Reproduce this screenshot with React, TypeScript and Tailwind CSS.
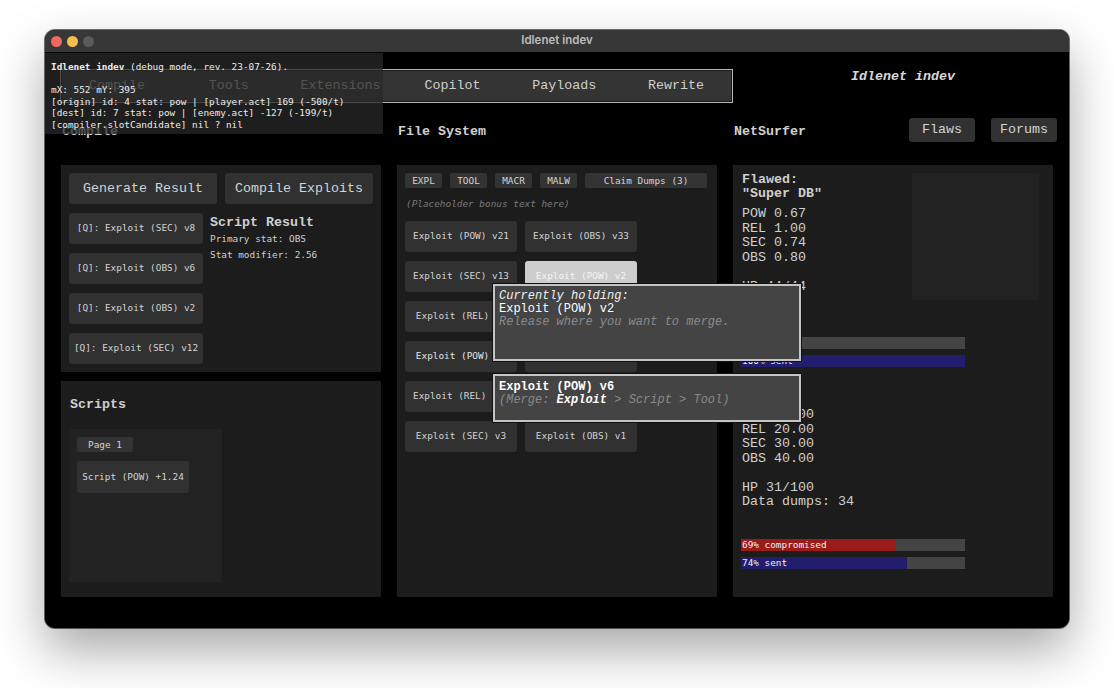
import React from "react";

const big = "font-['Liberation_Mono',monospace] text-[13.33px]";
const small = "font-['DejaVu_Sans_Mono',monospace] text-[9.4px]";

function Btn({ className = "", children }: { className?: string; children: React.ReactNode }) {
  return (
    <div className={`flex items-center justify-center rounded-[3px] bg-[#313131] text-[#d4d4d4] whitespace-nowrap ${className}`}>
      {children}
    </div>
  );
}

function Bar({ pct, label, color, className = "" }: { pct: number; label: string; color: string; className?: string }) {
  return (
    <div className={`relative h-[12px] w-[224px] bg-[#444444] ${className}`}>
      <div className={`h-full overflow-hidden whitespace-nowrap ${color}`} style={{ width: `${pct}%` }}>
        <span className={`${small} block pl-px leading-[12px] text-[#f0f0f0]`}>{label}</span>
      </div>
    </div>
  );
}

const tabs = ["Compile", "Tools", "Extensions", "Copilot", "Payloads", "Rewrite"];

const grid: { t: string; kind?: "drag" | "green" }[] = [
  { t: "Exploit (POW) v21" },
  { t: "Exploit (OBS) v33" },
  { t: "Exploit (SEC) v13" },
  { t: "Exploit (POW) v2", kind: "drag" },
  { t: "Exploit (REL) v4" },
  { t: "Exploit (SEC) v7" },
  { t: "Exploit (POW) v6", kind: "green" },
  { t: "Exploit (OBS) v9" },
  { t: "Exploit (REL) v11" },
  { t: "Exploit (POW) v5" },
  { t: "Exploit (SEC) v3" },
  { t: "Exploit (OBS) v1" },
];

export default function App() {
  return (
    <div className="w-[1114px] h-[688px] bg-white pl-[45px] pt-[30px] overflow-hidden">
      <div className="w-[1024px] h-[598px] rounded-[10px] overflow-hidden bg-black flex flex-col shadow-[0_22px_50px_rgba(0,0,0,0.35),0_0_0_1px_rgba(0,0,0,0.55)]">
        {/* title bar */}
        <div className="relative h-[23px] shrink-0 bg-[#373737] border-b border-black flex items-center">
          <div className="flex gap-[5px] pl-[6px]">
            <span className="w-[11px] h-[11px] rounded-full bg-[#ed6a5e]" />
            <span className="w-[11px] h-[11px] rounded-full bg-[#f5bf4f]" />
            <span className="w-[11px] h-[11px] rounded-full bg-[#5a5a5a]" />
          </div>
          <div className="absolute inset-0 flex items-center justify-center font-['Inter',sans-serif] text-[11.5px] font-semibold text-[#bcbcbc]">
            Idlenet indev
          </div>
        </div>

        {/* content */}
        <div className="relative flex-1 bg-black text-[#d0d0d0]">
          {/* top row */}
          <div className="pt-4 pl-[15px] flex items-start h-[50px]">
            <div className="grid grid-cols-6 w-[673px] h-[34px] bg-[#343434] border border-[#b8b8b8] shadow-[inset_0_0_0_1px_#1a1a1a]">
              {tabs.map((t) => (
                <div key={t} className={`flex items-center justify-center ${big} text-[#cfcfcf]`}>
                  {t}
                </div>
              ))}
            </div>
            <div className={`flex-1 text-center pl-1 pt-px leading-[14px] font-bold italic ${big} text-[#d8d8d8]`}>Idlenet indev</div>
          </div>

          {/* headings row */}
          <div className={`mt-[15px] pl-4 flex gap-4 h-[24px] ${big}`}>
            <div className="w-[320px] pl-px pt-[6px] leading-[16px] font-bold">Compile</div>
            <div className="w-[320px] pl-px pt-[6px] leading-[16px] font-bold">File System</div>
            <div className="w-[324px] flex justify-between">
              <div className="pl-px pt-[6px] leading-[16px] font-bold">NetSurfer</div>
              <div className="flex gap-4">
                <Btn className="w-[66px] h-[24px] bg-[#3a3a3a]">Flaws</Btn>
                <Btn className="w-[66px] h-[24px] bg-[#3a3a3a]">Forums</Btn>
              </div>
            </div>
          </div>

          {/* panels */}
          <div className="mt-[23px] pl-4 flex gap-4">
            {/* left column */}
            <div className="w-[320px] flex flex-col">
              <div className="h-[207px] bg-[#1c1c1c] p-2">
                <div className="flex gap-2">
                  <Btn className={`w-[148px] h-[31px] ${big}`}>Generate Result</Btn>
                  <Btn className={`w-[148px] h-[31px] ${big}`}>Compile Exploits</Btn>
                </div>
                <div className="flex mt-[9px]">
                  <div className={`flex flex-col gap-[9px] w-[134px] ${small}`}>
                    <Btn className="h-[31px]">[Q]: Exploit (SEC) v8</Btn>
                    <Btn className="h-[31px]">[Q]: Exploit (OBS) v6</Btn>
                    <Btn className="h-[31px]">[Q]: Exploit (OBS) v2</Btn>
                    <Btn className="h-[31px]">[Q]: Exploit (SEC) v12</Btn>
                  </div>
                  <div className="ml-[7px] mt-[2px]">
                    <div className={`${big} font-bold leading-[16px]`}>Script Result</div>
                    <div className={`${small} leading-[16px]`}>Primary stat: OBS</div>
                    <div className={`${small} leading-[16px]`}>Stat modifier: 2.56</div>
                  </div>
                </div>
              </div>
              <div className="mt-[9px] h-[216px] bg-[#1c1c1c] pl-2 pt-4">
                <div className={`${big} pl-px font-bold leading-[16px]`}>Scripts</div>
                <div className="mt-4 w-[153px] h-[153px] bg-[#222222] p-2">
                  <div className={`w-[56px] h-[15px] bg-[#333333] rounded-[2px] ${small} leading-[15px] text-center text-[#d4d4d4]`}>Page 1</div>
                  <Btn className={`mt-[9px] w-[112px] h-[32px] ${small}`}>Script (POW) +1.24</Btn>
                </div>
              </div>
            </div>

            {/* middle column */}
            <div className="w-[320px] h-[432px] bg-[#1c1c1c] p-2">
              <div className={`flex gap-2 ${small}`}>
                {["EXPL", "TOOL", "MACR", "MALW"].map((c) => (
                  <div key={c} className="w-[37px] h-[15px] bg-[#333333] rounded-[2px] leading-[15px] text-center text-[#d4d4d4]">{c}</div>
                ))}
                <div className="w-[122px] h-[15px] bg-[#333333] rounded-[2px] leading-[15px] text-center text-[#d4d4d4]">Claim Dumps (3)</div>
              </div>
              <div className={`${small} mt-[10px] pl-px leading-[12px] italic text-[#7a7a7a]`}>(Placeholder bonus text here)</div>
              <div className={`mt-[11px] grid grid-cols-[112px_112px] gap-x-2 gap-y-[9px] ${small}`}>
                {grid.map((g) => (
                  <Btn
                    key={g.t}
                    className={`h-[31px] ${g.kind === "drag" ? "bg-[#cdcdcd] text-[#f4f4f4]" : g.kind === "green" ? "bg-[#143c14] text-[#e4e4e4]" : ""}`}
                  >
                    {g.t}
                  </Btn>
                ))}
              </div>
            </div>

            {/* right column */}
            <div className="w-[320px] h-[432px] bg-[#1c1c1c] pt-2 px-2">
              <div className="flex justify-between">
                <div className={`${big} pl-px leading-[14.5px]`}>
                  <div className="font-bold leading-[14px]">Flawed:</div>
                  <div className="font-bold leading-[14px]">"Super DB"</div>
                  <div className="mt-[6px]">POW 0.67</div>
                  <div>REL 1.00</div>
                  <div>SEC 0.74</div>
                  <div>OBS 0.80</div>
                  <div>&nbsp;</div>
                  <div>HP 44/44</div>
                </div>
                <div className="w-[127px] h-[127px] bg-[#212121] mr-[6px]" />
              </div>
              <Bar className="mt-[37px]" pct={0} label="0% compromised" color="bg-[#9b1b1b]" />
              <Bar className="mt-[6px]" pct={100} label="100% sent" color="bg-[#221d6c]" />
              <div className={`${big} pl-px leading-[14.5px] mt-[41px]`}>
                <div>POW 10.00</div>
                <div>REL 20.00</div>
                <div>SEC 30.00</div>
                <div>OBS 40.00</div>
                <div>&nbsp;</div>
                <div>HP 31/100</div>
                <div>Data dumps: 34</div>
              </div>
              <Bar className="mt-[29px]" pct={69} label="69% compromised" color="bg-[#9b1b1b]" />
              <Bar className="mt-[6px]" pct={74} label="74% sent" color="bg-[#221d6c]" />
            </div>
          </div>

          {/* debug overlay */}
          <div className={`absolute left-0 top-0 w-[338px] h-[81px] bg-[rgba(40,40,40,0.75)] pl-[6px] pt-[8px] ${small} leading-[11.5px] text-[#ececec] whitespace-pre`}>
            <div><span className="font-bold">Idlenet indev</span> (debug mode, rev. 23-07-26).</div>
            <div>&nbsp;</div>
            <div>mX: 552 mY: 395</div>
            <div>[origin] id: 4 stat: pow | [player.act] 169 (-500/t)</div>
            <div>[dest] id: 7 stat: pow | [enemy.act] -127 (-199/t)</div>
            <div>[compiler.slotCandidate] nil ? nil</div>
          </div>

          {/* drag popups */}
          <div className="absolute left-[448px] top-[231px] w-[308px] h-[77px] bg-[#444444] border-2 border-[#c4c4c4] shadow-[0_0_0_1px_#111111] pl-1 pt-[4px] font-['Liberation_Mono',monospace] text-[12px] leading-[13px] whitespace-nowrap">
            <div className="italic text-[#f0f0f0]">Currently holding:</div>
            <div className="text-white">Exploit (POW) v2</div>
            <div className="italic text-[#8a8a8a]">Release where you want to merge.</div>
          </div>
          <div className="absolute left-[448px] top-[321px] w-[308px] h-[48px] bg-[#444444] border-2 border-[#c4c4c4] shadow-[0_0_0_1px_#111111] pl-1 pt-[5px] font-['Liberation_Mono',monospace] text-[12px] leading-[13px] whitespace-nowrap">
            <div className="font-bold text-white">Exploit (POW) v6</div>
            <div className="italic text-[#8a8a8a]">
              (Merge: <span className="font-bold text-white">Exploit</span> &gt; Script &gt; Tool)
            </div>
          </div>
        </div>
      </div>
    </div>
  );
}
